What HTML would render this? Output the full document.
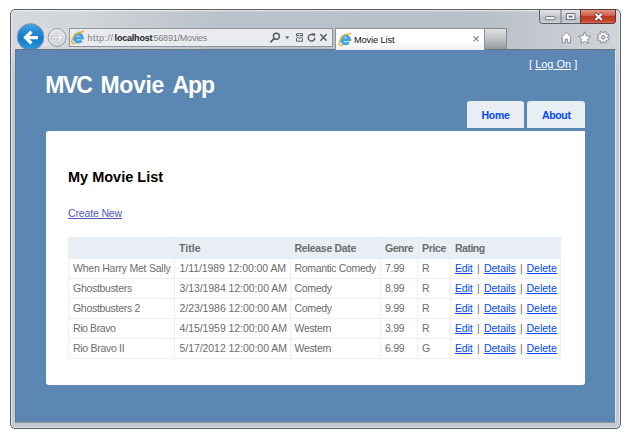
<!DOCTYPE html>
<html>
<head>
<meta charset="utf-8">
<title>Movie List</title>
<style>
html,body{margin:0;padding:0;}
body{width:634px;height:443px;background:#fff;position:relative;overflow:hidden;font-family:"Liberation Sans",sans-serif;}
.abs{position:absolute;}
.t{position:absolute;white-space:nowrap;line-height:1;}
/* window frame */
#win{left:10px;top:9px;width:609px;height:418px;border:1px solid #5c6066;border-radius:5px;
 background:linear-gradient(to bottom,rgba(255,255,255,.25) 0px,rgba(255,255,255,0) 3px,rgba(255,255,255,0) 40px,rgba(197,202,209,1) 60px),linear-gradient(to right,#d5d8dc 0%,#d2d5d9 12%,#bcc2cb 33%,#b9bfc8 78%,#c9cdd3 92%,#d0d3d8 100%);
 box-shadow:inset 0 0 0 1px rgba(255,255,255,.45);}
#content{left:15px;top:49px;width:599px;height:372px;border:1px solid #6b7580;border-right-color:#dfe3e8;border-bottom-color:#8d96a0;background:#5c87b2;overflow:hidden;}
/* chrome */
#addr{left:69px;top:28px;width:262px;height:17px;border:1px solid #8e949d;background:#e9ebef;}
#tab{left:335px;top:28px;width:148px;height:21px;border:1px solid #8e949d;border-bottom:none;background:linear-gradient(#fff 55%,#eef0f3);}
#newtab{left:484px;top:28px;width:21px;height:20px;border:1px solid #868a90;border-bottom:none;background:linear-gradient(#dddfe2,#c4c6ca 45%,#94979d);}
/* page */
#main{left:46px;top:131px;width:539px;height:254px;background:#fff;border-radius:3px 0 3px 3px;}
.menu{top:101px;height:27px;background:#e8eef4;border-radius:3px 3px 0 0;}
.hd{background:#e8eef4;}
.line{background:#ebf0f5;}
.c{color:#6c6c6c;font-size:10.5px;}
.b{font-weight:bold;}
.h1{top:73.7px;font-size:23px;color:#fff;}
.u{top:33.5px;font-size:9px;}
a{color:#034af3;text-decoration:underline;}
</style>
</head>
<body>
<div id="win" class="abs"></div>

<!-- browser chrome -->
<!-- chrome svg -->
<svg class="abs" style="left:0;top:0" width="634" height="52" viewBox="0 0 634 52">
<defs>
<linearGradient id="gback" x1="0" y1="0" x2="0" y2="1"><stop offset="0" stop-color="#4ba3e0"/><stop offset=".45" stop-color="#1581cf"/><stop offset=".55" stop-color="#0f7ac8"/><stop offset="1" stop-color="#2f9be0"/></linearGradient>
<linearGradient id="gfwd" x1="0" y1="0" x2="0" y2="1"><stop offset="0" stop-color="#e6e8eb"/><stop offset="1" stop-color="#d2d5da"/></linearGradient>
<linearGradient id="gbtn" x1="0" y1="0" x2="0" y2="1"><stop offset="0" stop-color="#e3e5e9"/><stop offset=".5" stop-color="#c6cad1"/><stop offset=".52" stop-color="#b7bcc5"/><stop offset="1" stop-color="#c9cdd4"/></linearGradient>
<linearGradient id="gclose" x1="0" y1="0" x2="0" y2="1"><stop offset="0" stop-color="#e2a08f"/><stop offset=".45" stop-color="#cd5a44"/><stop offset=".5" stop-color="#bc3820"/><stop offset=".8" stop-color="#c6462c"/><stop offset="1" stop-color="#dc7558"/></linearGradient>
</defs>
<!-- bridge between back and forward -->
<path d="M30 23.5 C42 24 44 30 57 28.5 L57 46.5 L30 46.5 Z" fill="#dfe1e4" opacity=".85"/>
<!-- back button -->
<circle cx="30.6" cy="37" r="13.4" fill="url(#gback)" stroke="#8e99a6" stroke-width="1"/>
<path d="M23.2 37.6 L30.3 30.6 L32.6 32.9 L29.5 36 L38 36 L38 39.2 L29.5 39.2 L32.6 42.3 L30.3 44.6 Z" fill="#fff"/>
<!-- forward button -->
<circle cx="57" cy="37.5" r="9" fill="url(#gfwd)" stroke="#979da6" stroke-width="1"/>
<path d="M63 37.5 L58 32.5 L56.6 33.9 L59 36.4 L51.5 36.4 L51.5 38.6 L59 38.6 L56.6 41.1 L58 42.5 Z" fill="#f4f5f6" stroke="#b3b8bf" stroke-width=".7"/>
<!-- window buttons -->
<path d="M539.5 9.5 H615.5 V20.5 Q615.5 23.5 612.5 23.5 H542.5 Q539.5 23.5 539.5 20.5 Z" fill="url(#gbtn)" stroke="#5b6068" stroke-width="1"/>
<path d="M580.5 9.5 H615.5 V20.5 Q615.5 23.5 612.5 23.5 H580.5 Z" fill="url(#gclose)" stroke="#5b3a36" stroke-width="1"/>
<path d="M561 10 V23" stroke="#6b7078" stroke-width="1"/>
<rect x="545.5" y="16.7" width="9.5" height="3" rx="1" fill="#fff" stroke="#5d636c" stroke-width=".9"/>
<rect x="566.3" y="13.6" width="8.6" height="6" fill="#fff" stroke="#5d636c" stroke-width=".9"/>
<rect x="568.6" y="15.6" width="4" height="2" fill="#6a7079"/>
<path d="M596 14.5 L601.2 19.3 M601.2 14.5 L596 19.3" stroke="#6a2f28" stroke-width="3.3" fill="none" stroke-linecap="square"/>
<path d="M596 14.5 L601.2 19.3 M601.2 14.5 L596 19.3" stroke="#fff" stroke-width="2" fill="none" stroke-linecap="square"/>
</svg>
<!-- /chrome svg -->

<div id="addr" class="abs"></div>
<!-- chrome icons -->
<svg class="abs" style="left:0;top:0" width="634" height="52" viewBox="0 0 634 52">
<g>
<path d="M81.42 40.52 A4.00 4.00 0 1 1 82.30 38.00 L74.70 38.00" fill="none" stroke="#45a3e3" stroke-width="3"/>
<path d="M75.30 43.30 C71.90 44.60 71.00 41.60 72.30 38.90 C73.90 35.00 77.70 31.90 83.70 31.50" fill="none" stroke="#f0b323" stroke-width="1.3" stroke-linecap="round"/>
</g>
<!-- search -->
<g stroke="#565b62" fill="none" stroke-linecap="round">
<circle cx="276.4" cy="36.3" r="3" stroke-width="1.4"/>
<path d="M274.2 38.6 L270.8 41.8" stroke-width="1.8"/>
</g>
<path d="M285 36.6 H289.4 L287.2 38.9 Z" fill="#565b62"/>
<!-- compat -->
<g fill="none" stroke="#5f646b" stroke-width="1">
<path d="M296.5 36.2 V33.7 H302.5 V36.2 L301 35.2 L299.5 36.4 L298 35.2 Z"/>
<path d="M296.5 38.4 V41.2 H302.5 V38.4 L301 37.4 L299.5 38.6 L298 37.4 Z"/>
</g>
<!-- refresh -->
<path d="M313.3 35 A3.3 3.3 0 1 0 314.8 37.9" fill="none" stroke="#565b62" stroke-width="1.4"/>
<path d="M311.6 33.2 L315.4 33.4 L314.6 37 Z" fill="#565b62"/>
<!-- stop -->
<path d="M320.4 34.2 L326.6 40.8 M326.6 34.2 L320.4 40.8" stroke="#565b62" stroke-width="1.4" fill="none"/>
<!-- home -->
<path d="M566.4 32.4 L571.7 37.6 L570.4 37.9 V42.8 H567.6 V39 H565.2 V42.8 H562.4 V37.9 L561.1 37.6 Z" fill="#fff" stroke="#878d96" stroke-width="1" stroke-linejoin="round"/>
<polygon points="584.60,31.80 586.36,35.87 590.78,36.29 587.45,39.23 588.42,43.56 584.60,41.30 580.78,43.56 581.75,39.23 578.42,36.29 582.84,35.87" fill="#fff" stroke="#878d96" stroke-width="1" stroke-linejoin="round"/>
<path d="M609.08 38.52 L608.21 40.59 L606.76 39.89 L605.79 40.86 L606.49 42.31 L604.42 43.18 L603.89 41.65 L602.51 41.65 L601.98 43.18 L599.91 42.31 L600.61 40.86 L599.64 39.89 L598.19 40.59 L597.32 38.52 L598.85 37.99 L598.85 36.61 L597.32 36.08 L598.19 34.01 L599.64 34.71 L600.61 33.74 L599.91 32.29 L601.98 31.42 L602.51 32.95 L603.89 32.95 L604.42 31.42 L606.49 32.29 L605.79 33.74 L606.76 34.71 L608.21 34.01 L609.08 36.08 L607.55 36.61 L607.55 37.99 Z M605.10 37.30 A1.9 1.9 0 1 0 601.30 37.30 A1.9 1.9 0 1 0 605.10 37.30 Z" fill="#fff" fill-rule="evenodd" stroke="#878d96" stroke-width="1" stroke-linejoin="round"/>
</svg>
<!-- /chrome icons -->
<div class="t u" style="left:87.6px;color:#7d7d7d;letter-spacing:0.5px;">http://</div>
<div class="t u b" style="left:114.6px;color:#1c1c1c;letter-spacing:-0.2px;">localhost</div>
<div class="t u" style="left:151.2px;color:#7d7d7d;letter-spacing:-0.2px;">:56891/Movies</div>

<div id="newtab" class="abs"></div>

<div id="content" class="abs"></div>
<div id="tab" class="abs"></div>
<!-- tab stuff -->
<svg class="abs" style="left:330px;top:26px" width="180" height="26" viewBox="330 26 180 26">
<g>
<path d="M348.72 42.32 A4.00 4.00 0 1 1 349.60 39.80 L342.00 39.80" fill="none" stroke="#45a3e3" stroke-width="3"/>
<path d="M342.60 45.10 C339.20 46.40 338.30 43.40 339.60 40.70 C341.20 36.80 345.00 33.70 351.00 33.30" fill="none" stroke="#f0b323" stroke-width="1.3" stroke-linecap="round"/>
</g>
<path d="M473.6 36.2 L478.8 41.4 M478.8 36.2 L473.6 41.4" stroke="#8b8f95" stroke-width="1.3" fill="none"/>
</svg>
<div class="t" style="left:354px;top:35.5px;font-size:9.3px;color:#111;letter-spacing:-0.15px;">Movie List</div>
<!-- /tab stuff -->


<!-- page -->
<div class="t b h1" style="left:45.3px;letter-spacing:-1.75px;">MVC</div>
<div class="t b h1" style="left:100.5px;letter-spacing:-0.35px;">Movie</div>
<div class="t b h1" style="left:172.6px;letter-spacing:-1.1px;">App</div>
<div class="t" style="left:529px;top:59px;font-size:11px;color:#fff;">[ <a style="color:#fff">Log On</a> ]</div>
<div class="abs menu" style="left:467px;width:57px;"></div>
<div class="abs menu" style="left:527px;width:58px;"></div>
<div class="t b" style="left:481.5px;top:110px;font-size:10.5px;color:#034af3;letter-spacing:-0.3px;">Home</div>
<div class="t b" style="left:542px;top:110px;font-size:10.5px;color:#034af3;letter-spacing:-0.35px;">About</div>
<div id="main" class="abs"></div>
<div class="t b" style="left:68px;top:169.9px;font-size:14.5px;color:#000;">My Movie List</div>
<div class="t" style="left:68px;top:208px;font-size:10.5px;letter-spacing:-0.15px;"><a style="color:#505abc">Create New</a></div>

<!-- movie table -->
<div class="abs hd" style="left:68px;top:237px;width:493px;height:22px;"></div>
<div class="abs line" style="left:68px;top:278px;width:493px;height:1px;"></div>
<div class="abs line" style="left:68px;top:298px;width:493px;height:1px;"></div>
<div class="abs line" style="left:68px;top:318px;width:493px;height:1px;"></div>
<div class="abs line" style="left:68px;top:338px;width:493px;height:1px;"></div>
<div class="abs line" style="left:68px;top:358px;width:493px;height:1px;"></div>
<div class="abs line" style="left:68px;top:237px;width:1px;height:122px;"></div>
<div class="abs line" style="left:174px;top:237px;width:1px;height:122px;"></div>
<div class="abs line" style="left:290px;top:237px;width:1px;height:122px;"></div>
<div class="abs line" style="left:380px;top:237px;width:1px;height:122px;"></div>
<div class="abs line" style="left:417px;top:237px;width:1px;height:122px;"></div>
<div class="abs line" style="left:450px;top:237px;width:1px;height:122px;"></div>
<div class="abs line" style="left:560px;top:237px;width:1px;height:122px;"></div>
<div class="t c b" style="left:179px;top:243px;letter-spacing:0.02px;">Title</div>
<div class="t c b" style="left:294.5px;top:243px;letter-spacing:-0.33px;">Release Date</div>
<div class="t c b" style="left:385px;top:243px;letter-spacing:-0.47px;">Genre</div>
<div class="t c b" style="left:422px;top:243px;letter-spacing:-0.34px;">Price</div>
<div class="t c b" style="left:455px;top:243px;letter-spacing:-0.51px;">Rating</div>
<div class="t c" style="left:73px;top:263px;letter-spacing:-0.23px;">When Harry Met Sally</div>
<div class="t c" style="left:179.5px;top:263px;letter-spacing:-0.06px;">1/11/1989 12:00:00 AM</div>
<div class="t c" style="left:294.5px;top:263px;letter-spacing:-0.33px;">Romantic Comedy</div>
<div class="t c" style="left:385px;top:263px;letter-spacing:-0.31px;">7.99</div>
<div class="t c" style="left:422px;top:263px;">R</div>
<div class="t c" style="left:455px;top:263px;"><a style="letter-spacing:-0.17px">Edit</a></div>
<div class="t c" style="left:477px;top:263px;">|</div>
<div class="t c" style="left:484px;top:263px;"><a style="letter-spacing:-0.07px">Details</a></div>
<div class="t c" style="left:520px;top:263px;">|</div>
<div class="t c" style="left:526.5px;top:263px;"><a>Delete</a></div>
<div class="t c" style="left:73px;top:283px;letter-spacing:-0.29px;">Ghostbusters</div>
<div class="t c" style="left:179.5px;top:283px;letter-spacing:-0.06px;">3/13/1984 12:00:00 AM</div>
<div class="t c" style="left:294.5px;top:283px;letter-spacing:-0.33px;">Comedy</div>
<div class="t c" style="left:385px;top:283px;letter-spacing:-0.31px;">8.99</div>
<div class="t c" style="left:422px;top:283px;">R</div>
<div class="t c" style="left:455px;top:283px;"><a style="letter-spacing:-0.17px">Edit</a></div>
<div class="t c" style="left:477px;top:283px;">|</div>
<div class="t c" style="left:484px;top:283px;"><a style="letter-spacing:-0.07px">Details</a></div>
<div class="t c" style="left:520px;top:283px;">|</div>
<div class="t c" style="left:526.5px;top:283px;"><a>Delete</a></div>
<div class="t c" style="left:73px;top:303px;letter-spacing:-0.3px;">Ghostbusters 2</div>
<div class="t c" style="left:179.5px;top:303px;letter-spacing:-0.06px;">2/23/1986 12:00:00 AM</div>
<div class="t c" style="left:294.5px;top:303px;letter-spacing:-0.33px;">Comedy</div>
<div class="t c" style="left:385px;top:303px;letter-spacing:-0.31px;">9.99</div>
<div class="t c" style="left:422px;top:303px;">R</div>
<div class="t c" style="left:455px;top:303px;"><a style="letter-spacing:-0.17px">Edit</a></div>
<div class="t c" style="left:477px;top:303px;">|</div>
<div class="t c" style="left:484px;top:303px;"><a style="letter-spacing:-0.07px">Details</a></div>
<div class="t c" style="left:520px;top:303px;">|</div>
<div class="t c" style="left:526.5px;top:303px;"><a>Delete</a></div>
<div class="t c" style="left:73px;top:323px;letter-spacing:-0.4px;">Rio Bravo</div>
<div class="t c" style="left:179.5px;top:323px;letter-spacing:-0.06px;">4/15/1959 12:00:00 AM</div>
<div class="t c" style="left:294.5px;top:323px;letter-spacing:-0.33px;">Western</div>
<div class="t c" style="left:385px;top:323px;letter-spacing:-0.31px;">3.99</div>
<div class="t c" style="left:422px;top:323px;">R</div>
<div class="t c" style="left:455px;top:323px;"><a style="letter-spacing:-0.17px">Edit</a></div>
<div class="t c" style="left:477px;top:323px;">|</div>
<div class="t c" style="left:484px;top:323px;"><a style="letter-spacing:-0.07px">Details</a></div>
<div class="t c" style="left:520px;top:323px;">|</div>
<div class="t c" style="left:526.5px;top:323px;"><a>Delete</a></div>
<div class="t c" style="left:73px;top:343px;letter-spacing:-0.29px;">Rio Bravo II</div>
<div class="t c" style="left:179.5px;top:343px;letter-spacing:-0.06px;">5/17/2012 12:00:00 AM</div>
<div class="t c" style="left:294.5px;top:343px;letter-spacing:-0.33px;">Western</div>
<div class="t c" style="left:385px;top:343px;letter-spacing:-0.31px;">6.99</div>
<div class="t c" style="left:422px;top:343px;">G</div>
<div class="t c" style="left:455px;top:343px;"><a style="letter-spacing:-0.17px">Edit</a></div>
<div class="t c" style="left:477px;top:343px;">|</div>
<div class="t c" style="left:484px;top:343px;"><a style="letter-spacing:-0.07px">Details</a></div>
<div class="t c" style="left:520px;top:343px;">|</div>
<div class="t c" style="left:526.5px;top:343px;"><a>Delete</a></div>
<!-- /movie table -->
</body>
</html>
